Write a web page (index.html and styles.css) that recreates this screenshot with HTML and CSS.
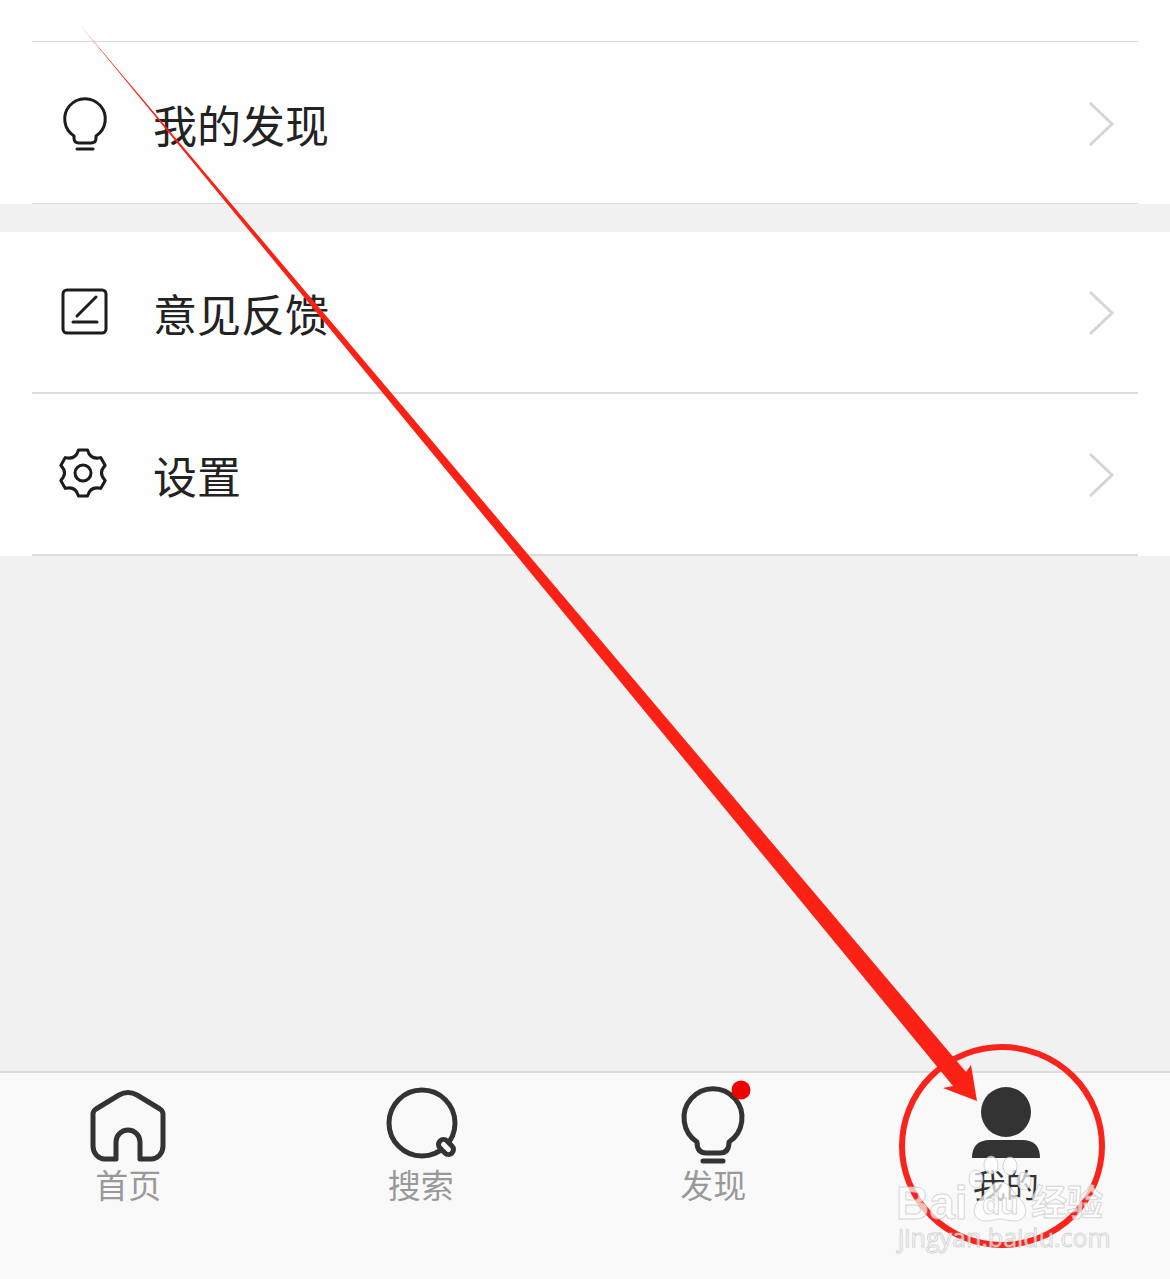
FILE: index.html
```html
<!DOCTYPE html>
<html lang="zh-CN">
<head>
<meta charset="utf-8">
<meta name="viewport" content="width=device-width, initial-scale=1">
<title>我的</title>
<link rel="stylesheet" href="styles.css">
</head>
<body>
<div class="page">
  <main class="content">
    <section class="group group-first">
      <div class="spacer"></div>
      <a class="row" href="#discoveries">
        <svg class="row-icon" viewBox="0 0 56 58" aria-hidden="true">
          <path d="M18 41A20.300 20.300 0 1 1 40 41V43Q40 48 35 48H23Q18 48 18 43Z M21 54H37"/>
        </svg>
        <span class="row-label">我的发现</span>
        <svg class="chevron" viewBox="0 0 26 46" aria-hidden="true"><path d="M2 2L24 23L2 44"/></svg>
      </a>
    </section>
    <section class="group">
      <a class="row row-strong" href="#feedback">
        <svg class="row-icon" viewBox="0 0 56 58" aria-hidden="true">
          <rect x="7" y="6" width="43" height="43" rx="4"/>
          <path d="M21 32L40 13M17 38H41"/>
        </svg>
        <span class="row-label">意见反馈</span>
        <svg class="chevron" viewBox="0 0 26 46" aria-hidden="true"><path d="M2 2L24 23L2 44"/></svg>
      </a>
      <a class="row row-strong" href="#settings">
        <svg class="row-icon" viewBox="0 0 56 58" aria-hidden="true">
          <g transform="translate(27 27)">
            <path d="M-4.500 -23H4.500Q7.400 -12.800 17.700 -15.400L22.200 -7.600Q14.800 0 22.200 7.600L17.700 15.400Q7.400 12.800 4.500 23H-4.500Q-7.400 12.800 -17.700 15.400L-22.200 7.600Q-14.800 0 -22.200 -7.600L-17.700 -15.400Q-7.400 -12.800 -4.500 -23Z"/>
            <circle r="8"/>
          </g>
        </svg>
        <span class="row-label">设置</span>
        <svg class="chevron" viewBox="0 0 26 46" aria-hidden="true"><path d="M2 2L24 23L2 44"/></svg>
      </a>
    </section>
  </main>

  <nav class="tabbar">
    <a class="tab" href="#home">
      <svg class="tab-icon" viewBox="0 0 80 82" aria-hidden="true">
        <path d="M28 75H17C10 75 5 69 5 62V30Q5 27 8 25L31 11Q40 6 49 11L72 25Q75 27 75 30V62C75 69 70 75 63 75H52V58A12 12 0 0 0 28 58Z"/>
      </svg>
      <span>首页</span>
    </a>
    <a class="tab" href="#search">
      <svg class="tab-icon" viewBox="0 0 80 82" aria-hidden="true">
        <circle cx="41" cy="39" r="33"/>
        <rect class="knob" x="56.500" y="58" width="17" height="10" rx="5" transform="rotate(45 65 63)"/>
      </svg>
      <span>搜索</span>
    </a>
    <a class="tab" href="#discover">
      <svg class="tab-icon" viewBox="0 0 80 82" aria-hidden="true">
        <path d="M24 58A29 29 0 1 1 56 58C56 65 53 69 47 69H33C27 69 24 65 24 58Z M30 77H50"/>
        <circle class="dot" cx="68" cy="6" r="9.500"/>
      </svg>
      <span>发现</span>
    </a>
    <a class="tab tab-active" href="#mine" aria-current="page">
      <svg class="tab-icon" viewBox="0 0 80 82" aria-hidden="true">
        <circle class="solid" cx="40" cy="28" r="25"/>
        <path class="solid" d="M6 74Q6 56 24 56H56Q74 56 74 74Z"/>
      </svg>
      <span>我的</span>
    </a>
  </nav>

  <svg class="annotation" viewBox="0 0 1170 1279" aria-hidden="true">
    <ellipse class="ring" cx="1002" cy="1146" rx="100" ry="99"/>
    <path class="arrow" d="M80 25L966 1072L971 1065L977 1101L943 1088L953 1086Z"/>
    <g class="watermark">
      <ellipse cx="991" cy="1165" rx="7" ry="9"/>
      <ellipse cx="1010" cy="1166" rx="7" ry="9"/>
      <ellipse cx="976" cy="1179" rx="7" ry="9"/>
      <ellipse cx="1024" cy="1181" rx="7" ry="9"/>
      <path d="M1000 1182C990 1182 988 1192 981 1198C970 1208 973 1221 986 1221C993 1221 995 1219 1000 1219C1005 1219 1008 1221 1014 1221C1027 1221 1030 1208 1019 1198C1012 1192 1010 1182 1000 1182Z"/>
      <text class="brand" x="896" y="1219">Bai</text>
      <text class="brand-du" x="982" y="1214">du</text>
      <text class="brand-cn" x="1031" y="1216">经验</text>
      <text class="site" x="898" y="1247">jingyan.baidu.com</text>
    </g>
  </svg>
</div>
</body>
</html>
```
FILE: styles.css
```css
* {
  box-sizing: border-box;
}

body {
  margin: 0;
  background: #f1f1f1;
  color: #222;
  font-family: "Noto Sans CJK SC", sans-serif;
}

a {
  color: inherit;
  text-decoration: none;
}

.page {
  position: relative;
  display: flex;
  flex-direction: column;
  min-height: 100vh;
  overflow: hidden;
}

.content {
  display: flex;
  flex: 1;
  flex-direction: column;
  gap: 28px;
}

.group {
  padding: 0 32px;
  background: #fefefe;
}

.spacer {
  height: 42px;
  border-bottom: 1px solid #dcdcdc;
}

.row {
  display: flex;
  align-items: center;
  height: 162px;
  padding: 2px 24px 0;
  border-bottom: 1px solid #dcdcdc;
}

.row-strong {
  border-bottom-width: 2px;
}

.row-icon {
  width: 56px;
  height: 58px;
  fill: none;
  stroke: #1c1c1c;
  stroke-width: 3;
  stroke-linecap: round;
  stroke-linejoin: round;
}

.row-label {
  flex: 1;
  margin-left: 41px;
  font-size: 44px;
  line-height: 60px;
}

.chevron {
  width: 26px;
  height: 46px;
  fill: none;
  stroke: #d6d6d6;
  stroke-width: 3;
}

.tabbar {
  display: grid;
  grid-template-columns: repeat(4, 1fr);
  min-height: 208px;
  border-top: 2px solid #dcdcdc;
  background: #f9f9f9;
}

.tab {
  display: flex;
  flex-direction: column;
  align-items: center;
  padding: 11px 36px 0 0;
  color: #999;
  font-size: 33px;
  line-height: 36px;
}

.tab-active {
  color: #333;
}

.tab-icon {
  width: 80px;
  height: 82px;
  overflow: visible;
  fill: none;
  stroke: #333;
  stroke-width: 5;
  stroke-linecap: round;
  stroke-linejoin: round;
}

.knob {
  fill: #f9f9f9;
}

.dot {
  fill: #f00000;
  stroke: none;
}

.solid {
  fill: #333;
  stroke: none;
}

.annotation {
  position: absolute;
  inset: 0;
  width: 100%;
  pointer-events: none;
}

.ring {
  fill: none;
  stroke: #f8231a;
  stroke-width: 6;
}

.arrow {
  fill: #fc2115;
}

.watermark {
  fill: #fff;
  fill-opacity: 0.7;
  stroke: #bbb;
  stroke-opacity: 0.6;
  stroke-width: 1;
}

.brand,
.brand-du {
  font-family: "Liberation Sans", sans-serif;
  font-weight: 700;
}

.brand {
  font-size: 46px;
}

.brand-du {
  font-size: 30px;
}

.brand-cn {
  font-size: 36px;
  font-weight: 700;
}

.site {
  font-family: "Open Sans", sans-serif;
  font-size: 25px;
}
```
